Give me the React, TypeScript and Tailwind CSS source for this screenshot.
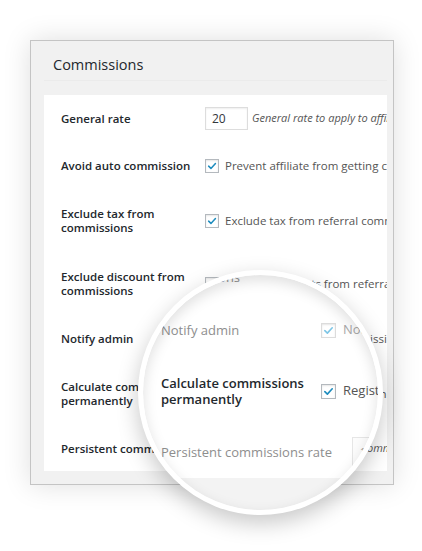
import React from "react";

const Check = ({ color = "#1e8cbe" }: { color?: string }) => (
  <svg viewBox="0 0 16 16" className="w-full h-full">
    <path d="M3.5 8.2 L6.6 11.2 L12.6 4.6" fill="none" stroke={color} strokeWidth="2" strokeLinecap="round" strokeLinejoin="round" />
  </svg>
);

const Checkbox = ({ faded = false, size = "w-[14px] h-[14px]" }: { faded?: boolean; size?: string }) => (
  <span
    className={`${size} shrink-0 flex items-center justify-center bg-white border ${
      faded ? "border-[#dcdcdc]" : "border-[#b4b9be]"
    } shadow-[inset_0_1px_2px_rgba(0,0,0,0.1)]`}
  >
    <Check color={faded ? "#7ec6e6" : "#1e8cbe"} />
  </span>
);

type Row = { label: string; tall?: boolean; nowrap?: boolean; control: React.ReactNode };

const rows: Row[] = [
  {
    label: "General rate",
    control: (
      <>
        <span className="w-[43px] h-[23px] shrink-0 border border-[#dddddd] bg-white shadow-[inset_0_1px_2px_rgba(0,0,0,0.07)] pl-[6px] text-[12px] leading-[21px] text-[#32373c]">
          20
        </span>
        <span className="ml-[4px] text-[11px] italic text-[#555]">General rate to apply to affiliates</span>
      </>
    ),
  },
  {
    label: "Avoid auto commission",
    control: (
      <>
        <Checkbox />
        <span className="ml-[6px] text-[11.5px] text-[#555]">Prevent affiliate from getting commissions from own purchases</span>
      </>
    ),
  },
  {
    label: "Exclude tax from commissions",
    tall: true,
    control: (
      <>
        <Checkbox />
        <span className="ml-[6px] text-[11.5px] text-[#555]">Exclude tax from referral commissions calculation</span>
      </>
    ),
  },
  {
    label: "Exclude discount from commissions",
    tall: true,
    control: (
      <>
        <Checkbox />
        <span className="ml-[6px] text-[11.5px] text-[#555]">Exclude discounts from referral commissions</span>
      </>
    ),
  },
  {
    label: "Notify admin",
    control: (
      <>
        <Checkbox />
        <span className="ml-[6px] text-[11.5px] text-[#555]">Notify admin of new commissions</span>
      </>
    ),
  },
  {
    label: "Calculate commissions permanently",
    tall: true,
    control: (
      <>
        <Checkbox />
        <span className="ml-[6px] text-[11.5px] text-[#555]">Register commissions permanently</span>
      </>
    ),
  },
  {
    label: "Persistent commissions rate",
    nowrap: true,
    control: (
      <>
        <span className="w-[43px] h-[23px] shrink-0 border border-[#dddddd] bg-white pl-[6px] text-[12px] leading-[21px] text-[#32373c]">
          10
        </span>
        <span className="ml-[4px] text-[11px] italic text-[#555]">Rate for the persistent commissions</span>
      </>
    ),
  },
];

export default function App() {
  return (
    <div className="relative w-[422px] h-[551px] overflow-hidden bg-white font-['Open_Sans',sans-serif]">
      <div className="pt-[40px] pl-[30px]">
        <div className="w-[364px] h-[445px] border border-[#c4c4c4] bg-[#f1f1f1] shadow-[0_0_26px_rgba(0,0,0,0.13)]">
          <div className="pl-[22px] pt-[14px] text-[14.5px] leading-[20px] text-[#23282d]">Commissions</div>
          <div className="mx-[13px] mt-[5px] h-px w-[343px] bg-[#ebebeb]" />
          <div className="ml-[13px] mt-[14px] w-[343px] h-[376px] overflow-hidden bg-white pl-[17px]">
            {rows.map((r) => (
              <div key={r.label} className={`flex items-center ${r.tall ? "h-[63px]" : "h-[47px]"}`}>
                <div
                  className={`w-[144px] shrink-0 pr-[10px] text-[11.5px] font-semibold leading-[14px] text-[#23282d] ${
                    r.nowrap ? "whitespace-nowrap" : ""
                  }`}
                >
                  {r.label}
                </div>
                <div className="flex items-center whitespace-nowrap">{r.control}</div>
              </div>
            ))}
          </div>
        </div>
      </div>

      {/* magnifier lens */}
      <div className="absolute left-[138px] top-[270px] w-[245px] h-[245px] rounded-full border-[5px] border-white bg-white overflow-hidden shadow-[0_8px_22px_rgba(0,0,0,0.22)]">
        <div className="mt-[-41px] pl-[18px]">
          <div className="flex items-center h-[70px]">
            <div className="w-[160px] shrink-0 text-[13px] leading-[16px] text-[#8e8e8e]">Exclude discount from commissions</div>
            <Checkbox faded size="w-[15px] h-[15px]" />
          </div>
          <div className="flex items-center h-[52px]">
            <div className="w-[160px] shrink-0 text-[13px] leading-[16px] text-[#8e8e8e]">Notify admin</div>
            <Checkbox faded size="w-[15px] h-[15px]" />
            <span className="ml-[7px] whitespace-nowrap text-[13px] text-[#a8a8a8]">Notify admin of new commissions</span>
          </div>
          <div className="flex items-center h-[70px]">
            <div className="w-[160px] shrink-0 text-[13px] font-semibold leading-[16px] text-[#23282d]">Calculate commissions permanently</div>
            <Checkbox size="w-[15px] h-[15px]" />
            <span className="ml-[7px] whitespace-nowrap text-[13px] text-[#555]">Register commissions permanently</span>
          </div>
          <div className="flex items-center h-[52px]">
            <div className="w-[191px] shrink-0 whitespace-nowrap text-[13px] leading-[16px] text-[#8e8e8e]">Persistent commissions rate</div>
            <span className="w-[40px] h-[31px] shrink-0 border border-[#e6e6e6] bg-[#fcfcfc] pl-[7px] text-[10px] leading-[29px] text-[#9a9a9a]">1</span>
          </div>
        </div>
        <div className="h-[80px] bg-[#f3f3f3]" />
        <div className="pointer-events-none absolute inset-0 rounded-full shadow-[inset_0_5px_14px_rgba(0,0,0,0.13)]" />
      </div>
    </div>
  );
}
